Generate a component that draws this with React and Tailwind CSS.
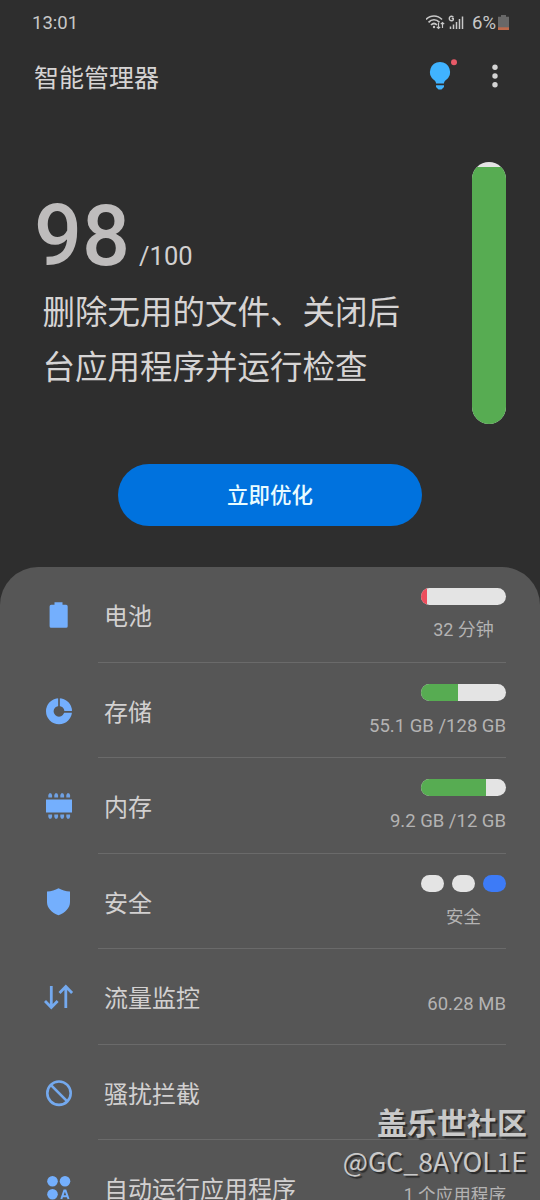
import React from 'react';

const BatteryIcon = () => (
  <svg className="w-[30px] h-[30px]" viewBox="0 0 30 30" fill="#74affd">
    <path d="M10.500 2.200h8v2.600h3.600a1.600 1.600 0 011.600 1.600v19.800a1.600 1.600 0 01-1.600 1.600H7.200a1.600 1.600 0 01-1.600-1.600V6.400a1.600 1.600 0 011.600-1.600h3.300z" />
  </svg>
);

const StorageIcon = () => (
  <svg className="w-[30px] h-[30px]" viewBox="0 0 30 30" fill="none">
    <circle cx="15" cy="15.300" r="9.200" stroke="#74affd" strokeWidth="7.600" />
    <path d="M15 15.300V1.500M15 15.800H29" stroke="#565656" strokeWidth="1.700" />
  </svg>
);

const MemoryIcon = () => (
  <svg className="w-[30px] h-[30px]" viewBox="0 0 30 30" fill="#74affd">
    <rect x="2" y="8.500" width="26" height="13" />
    {[4.3, 10.3, 16.3, 22.3].map((x) => (
      <g key={x} opacity="0.85">
        <path d={`M${x} 6.500v-2.500l1-1.800h1.800l1 1.800v2.500z`} />
        <path d={`M${x} 23.500v2.500l1 1.800h1.800l1-1.800v-2.500z`} />
      </g>
    ))}
  </svg>
);

const ShieldIcon = () => (
  <svg className="w-[30px] h-[30px]" viewBox="0 0 30 30" fill="#74affd">
    <path d="M14.500 1.300C18 3.200 21.500 4.300 26 4.600V15c0 6-4.500 10.500-11.500 13.300C7.500 25.500 3 21 3 15V4.600C7.500 4.300 11 3.200 14.500 1.300z" />
  </svg>
);

const TrafficIcon = () => (
  <svg className="w-[30px] h-[30px]" viewBox="0 0 30 30" fill="none" stroke="#74a9ee" strokeWidth="2.800">
    <path d="M7.300 4v21.500M1 19l6.300 6.500L13.600 19" />
    <path d="M21.800 26V4.500M15.500 11l6.300-6.500L28.100 11" />
  </svg>
);

const BlockIcon = () => (
  <svg className="w-[30px] h-[30px]" viewBox="0 0 30 30" fill="none" stroke="#74a9ee" strokeWidth="2.600">
    <circle cx="15" cy="15.200" r="11.700" />
    <path d="M7 7.200l16 16" />
  </svg>
);

const AutoRunIcon = () => (
  <svg className="w-[30px] h-[30px]" viewBox="0 0 30 30" fill="#74affd">
    <circle cx="8.500" cy="8.300" r="5.300" />
    <circle cx="21" cy="8.300" r="5.300" />
    <circle cx="8.500" cy="21.300" r="5.300" />
    <path d="M17.300 26l3-8.500h1.200l3 8.500M18.500 23.200h4.800" fill="none" stroke="#74affd" strokeWidth="2" />
  </svg>
);

const Meter = ({ percent, color }) => (
  <div className="w-[85px] h-[17px] rounded-full overflow-hidden bg-[#e4e4e4]">
    <div className={`h-full ${color}`} style={{ width: `${percent}%` }} />
  </div>
);

const SecurityDots = () => (
  <div className="w-[85px] flex justify-between">
    <span className="w-[23px] h-[17px] rounded-full bg-[#e4e4e4]" />
    <span className="w-[23px] h-[17px] rounded-full bg-[#e4e4e4]" />
    <span className="w-[23px] h-[17px] rounded-full bg-[#3d7bf7]" />
  </div>
);

const rows = [
  { label: '电池', icon: <BatteryIcon />, meter: <Meter percent={6.5} color="bg-[#ec4d5c]" />, value: '32 分钟', size: 'text-[18px]', center: true },
  { label: '存储', icon: <StorageIcon />, meter: <Meter percent={43.5} color="bg-[#57ac52]" />, value: '55.1 GB /128 GB' },
  { label: '内存', icon: <MemoryIcon />, meter: <Meter percent={76} color="bg-[#57ac52]" />, value: '9.2 GB /12 GB' },
  { label: '安全', icon: <ShieldIcon />, meter: <SecurityDots />, value: '安全', size: 'text-[17.500px]', center: true },
  { label: '流量监控', icon: <TrafficIcon />, value: '60.28 MB' },
  { label: '骚扰拦截', icon: <BlockIcon /> },
  { label: '自动运行应用程序', icon: <AutoRunIcon />, value: '1 个应用程序', size: 'text-[17.600px]' },
];

const Row = ({ label, icon, meter, value, size = 'text-[18.500px]', center }) => (
  <div className="h-[95.5px] flex pl-[44px] pr-[34px]">
    <div className="w-[54px] pt-[33px] shrink-0">{icon}</div>
    <div className="flex-1 flex justify-between border-b-[1.5px] border-[#6a6a6a] pl-[6px]">
      <div className="pt-[32px] text-[24px] leading-[36px] text-[#d2d0d0] whitespace-nowrap">{label}</div>
      <div className={`flex flex-col whitespace-nowrap ${meter ? 'pt-[21px]' : 'pt-[42.500px]'} ${center ? 'items-center' : 'items-end'}`}>
        {meter}
        {value && (
          <div className={`${size} leading-[24px] text-[#b4b3b3] ${meter ? 'mt-[13px]' : ''}`}>{value}</div>
        )}
      </div>
    </div>
  </div>
);

const StatusBar = () => (
  <div className="h-[46px] flex items-center justify-between pl-[32px] pr-[31px] text-[#c8c8c8] text-[18.500px]">
    <span className="pt-[2px]">13:01</span>
    <div className="flex items-center">
      <svg className="w-[20px] h-[18px]" viewBox="0 0 20 18" fill="none" stroke="#c8c8c8" strokeWidth="1.700">
        <path d="M0 5.500C4.500.8 11.500.8 16 5.500" />
        <path d="M2.500 8.300c3.300-3.400 7.700-3.400 11 0" />
        <path d="M5 11c1.800-1.800 4.200-1.800 6 0" />
        <circle cx="8" cy="13" r="1.200" fill="#c8c8c8" stroke="none" />
        <path d="M12.500 9v5.500M10.800 12.800l1.700 1.700 1.700-1.700M16.500 14V8.500M14.800 10.200l1.700-1.700 1.700 1.700" strokeWidth="1.200" />
      </svg>
      <svg className="w-[16px] h-[18px] ml-[2px]" viewBox="0 0 16 18" fill="none" stroke="#c8c8c8">
        <path d="M5.300 3.200A2.200 2.300 0 105.300 5.800V4.500H3.700" strokeWidth="1.400" />
        <path d="M2.500 15v-2.500M5.500 15v-4.500M8.500 15v-7" strokeWidth="1.500" />
        <path d="M11.500 15v-10M14.500 15V2.500" strokeWidth="1.500" />
      </svg>
      <span className="ml-[8px] pt-[2px]">6%</span>
      <svg className="w-[11px] h-[16px] ml-[2px]" viewBox="0 0 11 16">
        <path d="M3 0h5v1.800h3V15H0V1.800h3z" fill="#686868" />
        <path d="M0 12.300h11V15H0z" fill="#bd6a4c" />
      </svg>
    </div>
  </div>
);

const Header = () => (
  <div className="h-[62px] flex items-center justify-between pl-[34px] pr-[41px]">
    <h1 className="pt-[3px] text-[25px] leading-[36px] text-[#d6d4d4]">智能管理器</h1>
    <div className="flex items-center pb-[3px]">
      <svg className="w-[32px] h-[34px]" viewBox="0 0 32 34">
        <path d="M13 3a10 10 0 00-6 18c1.500 1.200 2 2 2 3.500h8c0-1.500.5-2.300 2-3.500a10 10 0 00-6-18z" fill="#40b3ff" />
        <path d="M9 26.300h8v1.700L14.500 30.500h-3L9 28z" fill="#40b3ff" />
        <circle cx="27" cy="3.200" r="3" fill="#e85a68" />
      </svg>
      <svg className="w-[8px] h-[26px] ml-[32px]" viewBox="0 0 8 26" fill="#d4d4d4">
        <circle cx="4" cy="4.300" r="2.700" />
        <circle cx="4" cy="13" r="2.700" />
        <circle cx="4" cy="21.700" r="2.700" />
      </svg>
    </div>
  </div>
);

const App = () => {
  return (
    <div className="relative w-[540px] h-[1200px] overflow-hidden bg-[#2e2e2e] font-['Roboto','Noto_Sans_CJK_SC',sans-serif]">
      <StatusBar />
      <Header />

      <div className="h-[262px] mt-[54px] flex justify-between pl-[34px] pr-[34px]">
        <div className="pt-[27px]">
          <div className="flex items-baseline">
            <span className="text-[84.500px] leading-[96px] font-medium text-[#bebcbc]">98</span>
            <span className="text-[25.500px] text-[#d2d0d0] ml-[9px]">/100</span>
          </div>
          <p className="w-[370px] mt-[1px] pl-[8.500px] text-[32.500px] leading-[55px] text-[#d6d4d4]">
            删除无用的文件、关闭后
            <br />
            台应用程序并运行检查
          </p>
        </div>
        <div className="w-[34px] h-[262px] rounded-full overflow-hidden bg-[#e4e4e4] pt-[5px]">
          <div className="h-full bg-[#57ac52]" />
        </div>
      </div>

      <button
        type="button"
        className="block w-[304px] h-[62px] mt-[40px] mx-auto pt-[3px] rounded-full bg-[#0072de] text-[21.500px] font-medium text-[#e9fcff]"
      >
        立即优化
      </button>

      <div className="mt-[41px] rounded-t-[38px] bg-[#565656]">
        {rows.map((row) => (
          <Row key={row.label} {...row} />
        ))}
      </div>

      <div className="absolute right-[13px] bottom-[20px] text-right text-[#c9c9c9] font-['Noto_Sans_CJK_SC',sans-serif] [text-shadow:2px_2px_1px_#2a2a2a]">
        <div className="text-[30px] leading-[38px] mb-[2px] font-bold">盖乐世社区</div>
        <div className="text-[26.600px] leading-[38px]">@GC_8AYOL1E</div>
      </div>
    </div>
  );
};

export default App;
